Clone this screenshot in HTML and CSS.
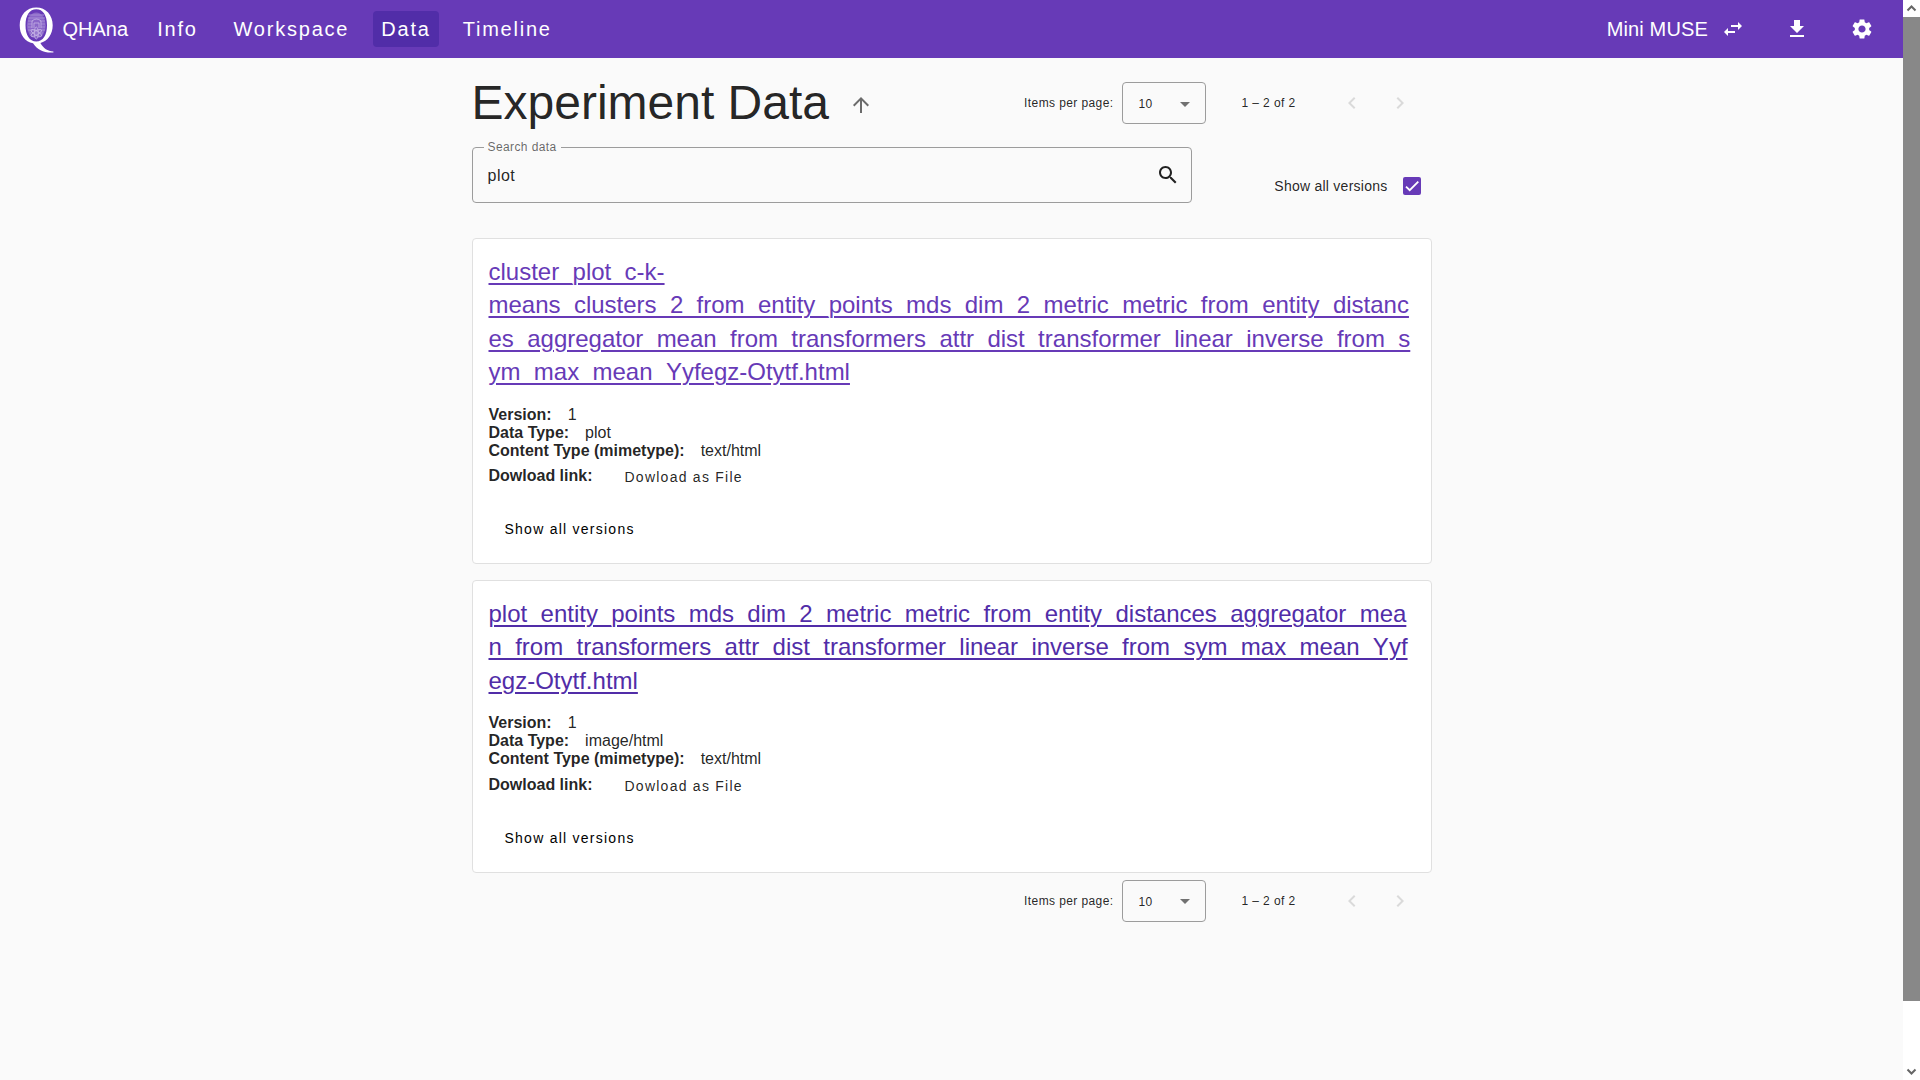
FILE: index.html
```html
<!DOCTYPE html>
<html lang="en">
<head>
<meta charset="utf-8">
<title>QHAna</title>
<link rel="stylesheet" href="styles.css">
</head>
<body>
<div class="page">
  <header class="toolbar">
    <svg class="logo" width="35" height="46" viewBox="0 0 35 46">
      <ellipse cx="17.3" cy="18.5" rx="9.5" ry="13" fill="#8a66c8"/>
      <path d="M9.500 8h15.500M9 11h17M9 14h5m7 0h5M9 17h4m9 0h4M9 20h4m9 0h4M9 23h17M11 26h13" stroke="#a68bd6" fill="none"/>
      <g fill="none" stroke="#c7b5e6" stroke-width=".8">
        <path d="M13 21v-7q4.500-4 9 0v7M15 21v-5h5v5"/>
        <ellipse cx="17.300" cy="26" rx="2" ry="6"/>
        <ellipse cx="17.300" cy="26" rx="2" ry="6" transform="rotate(60 17.300 26)"/>
        <ellipse cx="17.300" cy="26" rx="2" ry="6" transform="rotate(-60 17.300 26)"/>
      </g>
      <path fill="#fff" fill-rule="evenodd" d="M17.300 .500C27 .500 33.700 8 33.700 18.300c0 9-5 15.800-12.300 17.700 3.200 5.500 7 8 13 8.500v.900C25 46 19 43.500 14 36.200 6 34.800.700 28 .700 18.300.700 8 7.500.500 17.300.500zm0 1.800C10.500 2.300 6.500 8.500 6.500 18.300s4 16.200 10.800 16.200 10.700-6.400 10.700-16.200S24 2.300 17.300 2.300z"/>
    </svg>
    <span class="brand">QHAna</span>
    <nav class="nav">
      <a class="nav-item">Info</a>
      <a class="nav-item">Workspace</a>
      <a class="nav-item active">Data</a>
      <a class="nav-item">Timeline</a>
    </nav>
    <div class="actions">
      <span class="experiment">Mini MUSE</span>
      <svg class="icon swap" viewBox="0 0 24 24"><path d="M6.990 11L3 15l3.990 4v-3H14v-2H6.990v-3zM21 9l-3.990-4v3H10v2h7.010v3L21 9z"/></svg>
      <svg class="icon download" viewBox="0 0 24 24"><path d="M19 9h-4V3H9v6H5l7 7 7-7zM5 18v2h14v-2H5z"/></svg>
      <svg class="icon" viewBox="0 0 24 24"><path d="M19.140 12.940c.04-.3.060-.61.060-.94 0-.32-.02-.64-.07-.94l2.030-1.580c.18-.14.230-.41.120-.61l-1.920-3.320c-.12-.22-.37-.29-.59-.22l-2.390.960c-.5-.38-1.030-.7-1.620-.94l-.36-2.540c-.04-.24-.24-.41-.48-.41h-3.840c-.24 0-.43.170-.47.410l-.36 2.540c-.59.240-1.130.570-1.620.940l-2.390-.96c-.22-.08-.47 0-.59.220L2.740 8.870c-.12.210-.08.470.120.610l2.030 1.580c-.05.300-.09.630-.09.940s.02.640.070.940l-2.030 1.580c-.18.140-.23.410-.12.610l1.920 3.320c.12.220.370.290.590.220l2.390-.96c.5.380 1.030.700 1.620.940l.36 2.540c.05.240.240.410.480.410h3.840c.24 0 .44-.17.470-.41l.36-2.540c.59-.24 1.130-.56 1.620-.94l2.390.960c.22.080.470 0 .590-.22l1.920-3.320c.12-.22.070-.47-.12-.61l-2.010-1.580zM12 15.600c-1.980 0-3.600-1.620-3.600-3.600s1.620-3.600 3.600-3.600 3.600 1.620 3.600 3.600-1.620 3.600-3.600 3.600z"/></svg>
    </div>
  </header>
  <main class="content">
    <div class="title-row">
      <h1>Experiment Data</h1>
      <svg class="icon muted" viewBox="0 0 24 24"><path d="M4 12l1.410 1.410L11 7.830V20h2V7.830l5.580 5.590L20 12l-8-8-8 8z"/></svg>
      <div class="paginator">
        <span class="per-page">Items per page:</span>
        <div class="select"><span>10</span><i class="caret"></i></div>
        <span class="range">1 – 2 of 2</span>
        <svg class="icon disabled" viewBox="0 0 24 24"><path d="M15.410 7.410L14 6l-6 6 6 6 1.410-1.410L10.830 12z"/></svg>
        <svg class="icon disabled" viewBox="0 0 24 24"><path d="M10 6L8.590 7.410 13.170 12l-4.580 4.590L10 18l6-6z"/></svg>
      </div>
    </div>
    <div class="search-row">
      <fieldset class="search">
        <legend>Search data</legend>
        <div class="search-body">
          <span class="query">plot</span>
          <svg class="icon" viewBox="0 0 24 24"><path d="M15.500 14h-.79l-.28-.27C15.410 12.590 16 11.110 16 9.500 16 5.910 13.090 3 9.500 3S3 5.910 3 9.500 5.910 16 9.500 16c1.610 0 3.090-.59 4.230-1.570l.27.280v.79l5 4.990L20.490 19l-4.990-5zm-6 0C7.010 14 5 11.990 5 9.500S7.010 5 9.500 5 14 7.010 14 9.500 11.990 14 9.500 14z"/></svg>
        </div>
      </fieldset>
      <div class="versions">
        <span>Show all versions</span>
        <span class="checkbox"><svg width="14" height="14" viewBox="0 0 24 24"><path fill="none" stroke="#fff" stroke-width="3.120" d="M1.730 12.910 8.100 19.280 22.790 4.590"/></svg></span>
      </div>
    </div>
    <article class="card">
      <a class="name">cluster_plot_c-k-means_clusters_2_from_entity_points_mds_dim_2_metric_metric_from_entity_distances_aggregator_mean_from_transformers_attr_dist_transformer_linear_inverse_from_sym_max_mean_Yyfegz-Otytf.html</a>
      <div class="field"><b>Version:</b><span>1</span></div>
      <div class="field"><b>Data Type:</b><span>plot</span></div>
      <div class="field"><b>Content Type (mimetype):</b><span>text/html</span></div>
      <div class="field link"><b>Dowload link:</b><a class="file">Dowload as File</a></div>
      <a class="show-all">Show all versions</a>
    </article>
    <article class="card">
      <a class="name visited">plot_entity_points_mds_dim_2_metric_metric_from_entity_distances_aggregator_mean_from_transformers_attr_dist_transformer_linear_inverse_from_sym_max_mean_Yyfegz-Otytf.html</a>
      <div class="field"><b>Version:</b><span>1</span></div>
      <div class="field"><b>Data Type:</b><span>image/html</span></div>
      <div class="field"><b>Content Type (mimetype):</b><span>text/html</span></div>
      <div class="field link"><b>Dowload link:</b><a class="file">Dowload as File</a></div>
      <a class="show-all">Show all versions</a>
    </article>
    <div class="paginator bottom">
      <span class="per-page">Items per page:</span>
      <div class="select"><span>10</span><i class="caret"></i></div>
      <span class="range">1 – 2 of 2</span>
      <svg class="icon disabled" viewBox="0 0 24 24"><path d="M15.410 7.410L14 6l-6 6 6 6 1.410-1.410L10.830 12z"/></svg>
      <svg class="icon disabled" viewBox="0 0 24 24"><path d="M10 6L8.590 7.410 13.170 12l-4.580 4.590L10 18l6-6z"/></svg>
    </div>
  </main>
</div>
<div class="scrollbar">
  <svg width="17" height="17" viewBox="0 0 17 17"><path d="M4.500 10.500l4-4 4 4"/></svg>
  <div class="thumb"></div>
  <svg width="17" height="17" viewBox="0 0 17 17"><path d="M4.500 6.500l4 4 4-4"/></svg>
</div>
</body>
</html>
```

FILE: styles.css
```css
* { box-sizing: border-box; }
body {
  margin: 0;
  height: 1080px;
  display: flex;
  overflow: hidden;
  background: #fafafa;
  color: rgba(0, 0, 0, .87);
  font: 16px/18px "Liberation Sans", Arial, sans-serif;
}
.page { flex: 1; }
.icon { width: 24px; height: 24px; fill: currentColor; flex: none; }
.toolbar {
  height: 58px;
  padding: 0 29px 0 19px;
  display: flex;
  align-items: center;
  background: #673ab7;
  color: #fff;
  font-size: 20px;
}
.logo { flex: none; margin: 1px 8.500px 0 0; }
.brand { width: 67px; }
.nav { display: flex; gap: 16px; margin-left: 16px; }
.nav-item {
  min-width: 64px;
  height: 36px;
  padding: 0 8px;
  border-radius: 4px;
  line-height: 36px;
  text-align: center;
  letter-spacing: 1.786px;
}
.active { background: #512da8; }
.actions { display: flex; align-items: center; margin-left: auto; }
.experiment { letter-spacing: .15px; }
.swap { margin: 0 40px 0 13px; }
.download { margin-right: 41px; }
.content { width: 960px; margin: 0 auto; padding-top: 16px; }
.title-row { display: flex; align-items: center; height: 58px; }
h1 { margin: 0 20px 0 0; font-size: 48px; font-weight: 400; line-height: 56px; }
.muted { color: #6b6b6b; margin-top: 4px; }
.paginator {
  margin-left: auto;
  padding-right: 20px;
  display: flex;
  align-items: center;
  justify-content: flex-end;
  font-size: 12px;
  letter-spacing: .4px;
}
.select {
  width: 84px;
  height: 42px;
  margin: 0 36px 0 8px;
  padding: 2px 15px 0 16px;
  border: 1px solid #9c9c9c;
  border-radius: 4px;
  display: flex;
  align-items: center;
  justify-content: space-between;
}
.caret { border: 5px solid transparent; border-top-color: #717171; border-bottom: 0; }
.range { width: 98px; }
.disabled { color: #dadada; }
.disabled + .disabled { margin-left: 24px; }
.search-row { display: flex; height: 106px; padding-top: 8px; }
.search {
  width: 720px;
  height: 63px;
  margin: 0;
  padding: 0 11px;
  border: 1px solid #9c9c9c;
  border-radius: 4px;
}
.search legend {
  padding: 0 4px;
  font-size: 12px;
  line-height: 14px;
  letter-spacing: .4px;
  color: rgba(0, 0, 0, .6);
}
.search-body {
  height: 42px;
  padding: 0 0 0 4px;
  display: flex;
  align-items: center;
  justify-content: space-between;
}
.query { padding-top: 2px; letter-spacing: .5px; }
.versions {
  margin-left: auto;
  padding: 36px 11px 0 0;
  height: 56px;
  display: flex;
  align-items: center;
  gap: 15px;
  font-size: 14px;
  letter-spacing: .25px;
}
.checkbox {
  width: 18px;
  height: 18px;
  border-radius: 2px;
  background: #673ab7;
  display: grid;
  place-items: center;
}
.card {
  margin-bottom: 16px;
  padding: 16px;
  background: #fff;
  border: 1px solid #e0e0e0;
  border-radius: 4px;
}
.name {
  display: block;
  margin-bottom: 17.200px;
  font-size: 24px;
  line-height: 33.400px;
  color: #673ab7;
  text-decoration: underline 2px;
  text-underline-offset: 3px;
  overflow-wrap: anywhere;
}
.visited { color: #512da8; }
.field { display: flex; gap: 16px; }
.link { height: 51.200px; padding-top: 7.600px; }
.file {
  padding: 1px 16px 0;
  font-size: 14px;
  letter-spacing: 1.25px;
}
.show-all {
  display: block;
  height: 36px;
  padding: 0 16px;
  color: #000;
  font-size: 14px;
  line-height: 36px;
  letter-spacing: 1.25px;
}
.bottom { margin-top: -9px; }
.scrollbar {
  width: 17px;
  display: flex;
  flex-direction: column;
  justify-content: space-between;
  background: #fff;
}
.scrollbar svg { fill: none; stroke: #666; stroke-width: 2; flex: none; }
.thumb { height: 984px; margin-bottom: auto; background: #888; }
```
